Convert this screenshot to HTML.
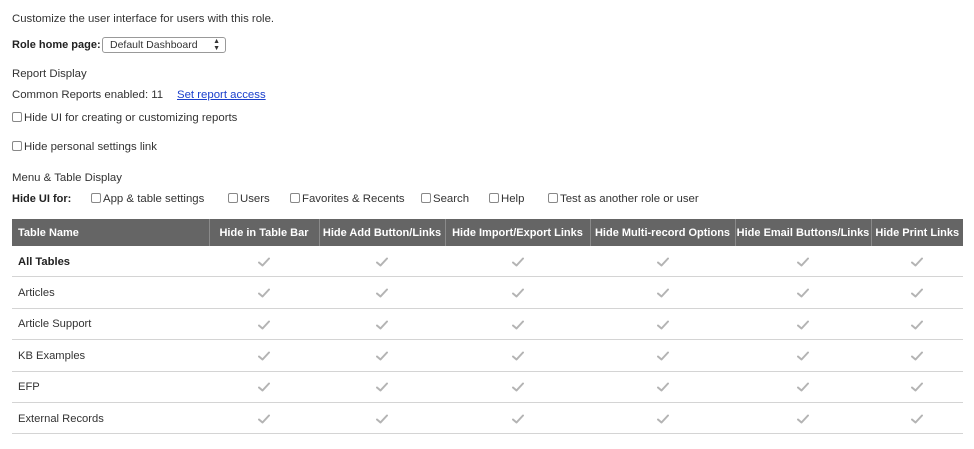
<!DOCTYPE html>
<html><head><meta charset="utf-8"><style>
body{margin:0;width:974px;height:449px;background:#fff;font-family:"Liberation Sans",sans-serif;color:#333;font-size:11.4px;position:relative;overflow:hidden}
.t{position:absolute;white-space:nowrap;line-height:14px}
.cb{display:inline-block;width:8px;height:8px;border:1px solid #888;border-radius:2px;vertical-align:-1px;margin-right:2px;background:#fff}
a{color:#1a3fcc;text-decoration:underline}
table{position:absolute;left:12px;top:219px;border-collapse:collapse;table-layout:fixed;width:951px}
th{background:#656565;color:#fff;font-weight:bold;font-size:11px;height:27px;padding:0;text-align:center;border-left:1px solid #8a8a8a;white-space:nowrap;overflow:hidden}
th:first-child{text-align:left;padding-left:6px;border-left:none}
td{height:29.4px;border-bottom:1px solid #d4d4d4;padding:1px 0 0 0;text-align:center;font-size:11.2px}
td:first-child{text-align:left;padding-left:6px}
svg{vertical-align:middle}
</style></head><body>
<div class="t" style="left:12px;top:12px">Customize the user interface for users with this role.</div>
<div class="t" style="left:12px;top:38px;font-weight:bold;color:#222;font-size:11px">Role home page:</div>
<div class="t" style="left:102px;top:37px;border:1px solid #999;border-radius:3px;line-height:14px;font-size:10.5px;padding-left:7px;box-sizing:border-box;width:124px;height:16px">Default Dashboard<span style="position:absolute;right:5px;top:0;font-size:7px;line-height:7px">▲<br>▼</span></div>
<div class="t" style="left:12px;top:67px">Report Display</div>
<div class="t" style="left:12px;top:88px">Common Reports enabled: 11</div>
<div class="t" style="left:177px;top:88px"><a>Set report access</a></div>
<div class="t" style="left:12px;top:111px"><span class="cb"></span>Hide UI for creating or customizing reports</div>
<div class="t" style="left:12px;top:140px"><span class="cb"></span>Hide personal settings link</div>
<div class="t" style="left:12px;top:171px">Menu &amp; Table Display</div>
<div class="t" style="left:12px;top:192px;font-weight:bold;color:#222;font-size:11px">Hide UI for:</div>
<div class="t" style="left:91px;top:192px"><span class="cb"></span>App &amp; table settings</div>
<div class="t" style="left:228px;top:192px"><span class="cb"></span>Users</div>
<div class="t" style="left:290px;top:192px"><span class="cb"></span>Favorites &amp; Recents</div>
<div class="t" style="left:421px;top:192px"><span class="cb"></span>Search</div>
<div class="t" style="left:489px;top:192px"><span class="cb"></span>Help</div>
<div class="t" style="left:548px;top:192px"><span class="cb"></span>Test as another role or user</div>
<table>
<colgroup><col style="width:197px"><col style="width:110px"><col style="width:126px"><col style="width:145px"><col style="width:145px"><col style="width:136px"><col style="width:92px"></colgroup>
<tr><th>Table Name</th><th>Hide in Table Bar</th><th>Hide Add Button/Links</th><th>Hide Import/Export Links</th><th>Hide Multi-record Options</th><th>Hide Email Buttons/Links</th><th>Hide Print Links</th></tr>
</table>
<script>
var names=["All Tables","Articles","Article Support","KB Examples","EFP","External Records"];
var ck='<svg width="12" height="10" viewBox="0 0 12 10"><path d="M1 5.5 L4.5 8.5 L11 1.5" fill="none" stroke="#b4b4b4" stroke-width="2" stroke-linecap="round" stroke-linejoin="round"/></svg>';
var tb=document.querySelector('table');
names.forEach(function(n,i){var r=tb.insertRow();var c=r.insertCell();c.textContent=n;if(i==0){c.style.fontWeight="bold";c.style.color="#222"}for(var k=0;k<6;k++){r.insertCell().innerHTML=ck}});
</script>
</body></html>
